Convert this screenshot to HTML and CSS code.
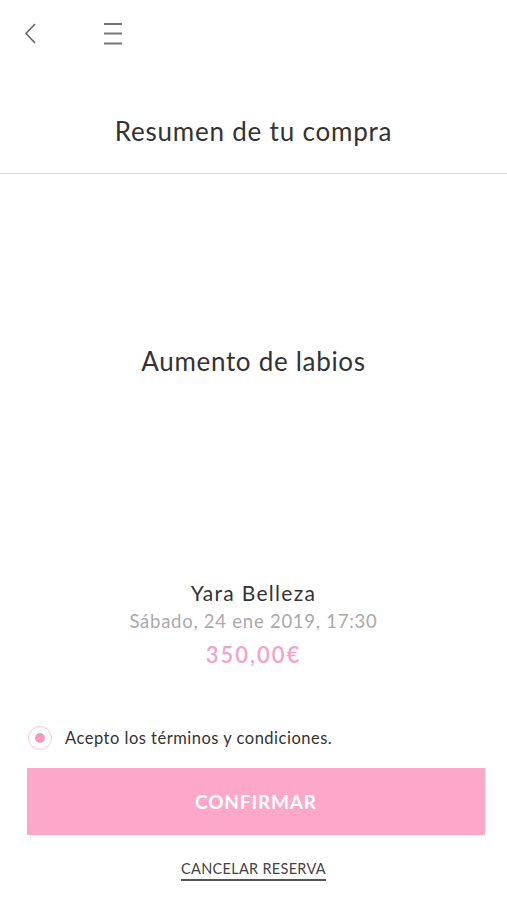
FILE: index.html
```html
<!DOCTYPE html>
<html lang="es">
<head>
<meta charset="utf-8">
<title>Resumen de tu compra</title>
<link rel="stylesheet" href="styles.css">
</head>
<body>
<div class="app">
  <header class="header">
    <div class="topbar">
      <svg class="icon-back" width="13" height="21" viewBox="0 0 13 21"><path d="M11 1 L2 10.5 L11 20" fill="none" stroke="#666" stroke-width="1.6"/></svg>
      <svg class="icon-menu" width="19" height="22" viewBox="0 0 19 22"><path d="M0 1 H18 M0 10.5 H18 M0 20.5 H18" fill="none" stroke="#777" stroke-width="1.8"/></svg>
    </div>
    <h1 class="title">Resumen de tu compra</h1>
  </header>
  <main class="content">
    <h2 class="service">Aumento de labios</h2>
    <div class="info">
      <div class="shop">Yara Belleza</div>
      <div class="date">Sábado, 24 ene 2019, 17:30</div>
      <div class="price">350,00€</div>
    </div>
    <label class="terms">
      <span class="radio"><span class="radio-dot"></span></span>
      <span class="terms-text">Acepto los términos y condiciones.</span>
    </label>
    <button class="confirm">CONFIRMAR</button>
    <div class="cancel-wrap"><a class="cancel">CANCELAR RESERVA</a></div>
  </main>
</div>
</body>
</html>
```
FILE: styles.css
```css
* { box-sizing: border-box; }
html, body { margin: 0; padding: 0; background: #fff; }
body {
  font-family: "Lato", "Open Sans", sans-serif;
  color: #333;
}
.app { width: 507px; }
.header {
  border-bottom: 1px solid #dcdcdc;
  height: 174px;
}
.topbar {
  height: 67px;
  display: flex;
  align-items: center;
  padding-left: 24px;
}
.icon-back { display: block; }
.icon-menu { display: block; margin-left: 67px; }
.title {
  margin: 0;
  padding-top: 44px;
  line-height: 40px;
  font-size: 26px;
  font-weight: 400;
  letter-spacing: 0.8px;
  text-align: center;
  color: #333;
}
.content {
  display: flex;
  flex-direction: column;
}
.service {
  margin: 167px 0 0;
  line-height: 40px;
  font-size: 26px;
  font-weight: 400;
  letter-spacing: 0.7px;
  text-align: center;
  color: #333;
}
.info {
  margin-top: 198px;
  display: flex;
  flex-direction: column;
  align-items: center;
}
.shop { font-size: 21px; line-height: 28px; letter-spacing: 1.3px; color: #333; }
.date { font-size: 18.5px; line-height: 28px; letter-spacing: 0.75px; color: #aaa; }
.price {
  margin-top: 6px;
  font-size: 22px;
  line-height: 28px;
  font-weight: 600;
  letter-spacing: 2px;
  color: #f3a3c6;
}
.terms {
  margin-top: 56px;
  height: 26px;
  display: flex;
  align-items: center;
  padding-left: 28px;
}
.radio {
  width: 24px;
  height: 24px;
  border-radius: 50%;
  border: 1.5px solid #f7c8da;
  display: flex;
  align-items: center;
  justify-content: center;
}
.radio-dot {
  width: 10px;
  height: 10px;
  border-radius: 50%;
  background: #f29cc0;
}
.terms-text {
  margin-left: 13px;
  font-size: 16.5px;
  letter-spacing: 0.5px;
  color: #333;
}
.confirm {
  margin: 17px 22px 0 27px;
  height: 67px;
  border: none;
  background: #fea8c9;
  color: #fff;
  font-family: inherit;
  font-size: 19px;
  font-weight: 700;
  letter-spacing: 0.85px;
}
.cancel-wrap {
  margin-top: 23px;
  text-align: center;
}
.cancel {
  display: inline-block;
  font-size: 14.5px;
  line-height: 20px;
  letter-spacing: 0.3px;
  border-bottom: 2px solid #555;
  color: #444;
}
```
